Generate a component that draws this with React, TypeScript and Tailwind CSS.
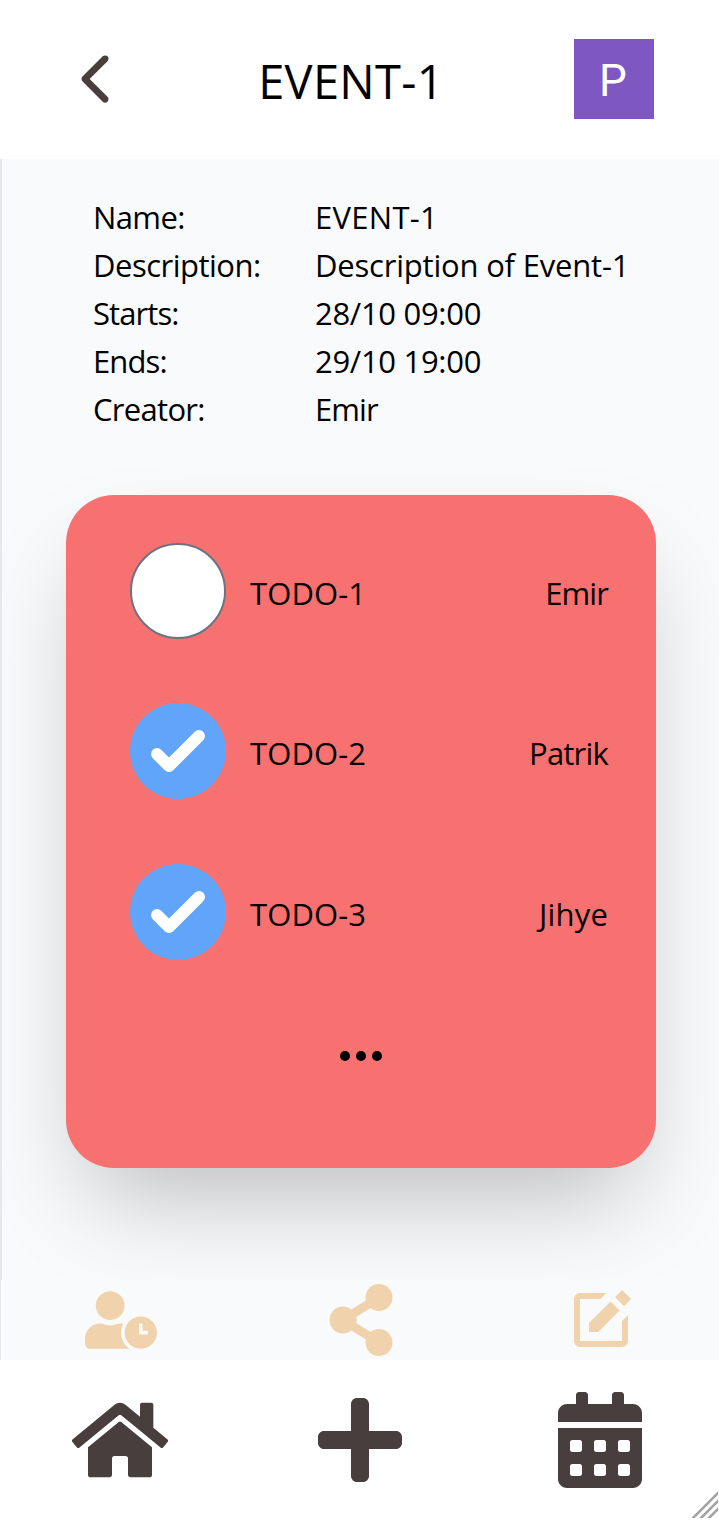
import React from "react";
import { FaUserClock, FaShareAlt, FaHome, FaPlus, FaCalendarAlt } from "react-icons/fa";

const details = [
  { label: "Name:", value: "EVENT-1", labelClass: "tracking-[-0.6px]", valueClass: "tracking-[0.3px]" },
  { label: "Description:", value: "Description of Event-1", labelClass: "tracking-[-0.5px]", valueClass: "tracking-[-0.2px]" },
  { label: "Starts:", value: "28/10 09:00", labelClass: "tracking-[-0.9px]", valueClass: "tracking-[-0.3px]" },
  { label: "Ends:", value: "29/10 19:00", labelClass: "tracking-[-0.9px]", valueClass: "tracking-[-0.3px]" },
  { label: "Creator:", value: "Emir", labelClass: "tracking-[-0.7px]", valueClass: "tracking-[-0.9px]" },
];

const todos = [
  { title: "TODO-1", owner: "Emir", done: false, ownerClass: "tracking-[-0.9px]" },
  { title: "TODO-2", owner: "Patrik", done: true, ownerClass: "tracking-[-0.8px]" },
  { title: "TODO-3", owner: "Jihye", done: true, ownerClass: "tracking-[0.2px]" },
];

function BackIcon() {
  return (
    <svg className="h-[72px] w-[72px]" viewBox="0 0 512 512" fill="currentColor">
      <path d="M217.9 256L345 129c9.4-9.4 9.4-24.6 0-33.9-9.4-9.4-24.6-9.3-34 0L167 239c-9.1 9.1-9.3 23.7-.7 33.1L310.9 417c4.7 4.7 10.9 7 17 7s12.3-2.3 17-7c9.4-9.4 9.4-24.6 0-33.9L217.9 256z" />
    </svg>
  );
}

function EditIcon() {
  return (
    <svg className="h-[72px] w-[72px]" viewBox="0 0 24 24" fill="currentColor">
      <path d="M13.8 3H5a2 2 0 0 0-2 2v14a2 2 0 0 0 2 2h14a2 2 0 0 0 2-2v-8.7l-2 2V19H5V5h6.8z" />
      <path d="M8 16h3.1l7.1-7.2-3-3L8 13z" />
      <path d="M16.7 4.4 19 2l3 3-2.3 2.4z" />
    </svg>
  );
}

function Check({ done }: { done: boolean }) {
  if (!done) return <span className="size-24 rounded-full border-2 border-[#6b7280] bg-white" />;
  return (
    <span className="size-24 rounded-full bg-[#60a5fa] text-white">
      <svg className="size-24" viewBox="0 0 16 16" fill="currentColor">
        <path d="M12.207 4.793a1 1 0 010 1.414l-5 5a1 1 0 01-1.414 0l-2-2a1 1 0 011.414-1.414L6.5 9.086l4.293-4.293a1 1 0 011.414 0z" />
      </svg>
    </span>
  );
}

export default function App() {
  return (
    <div className="flex h-[1520px] w-[719px] flex-col overflow-hidden bg-white font-['Open_Sans','Noto_Sans',sans-serif] text-black">
      <header className="grid h-[159px] shrink-0 grid-cols-[200px_1fr_200px] items-center pb-px">
        <div className="pl-[59px] text-[#493e3e]">
          <BackIcon />
        </div>
        <h1 className="pt-1 pr-[17px] text-center text-[47px] leading-[64px] tracking-[0.3px] whitespace-nowrap">EVENT-1</h1>
        <div className="ml-[55px] flex size-20 items-center justify-center bg-[#7e57c2] pt-[3px] pr-0.5 font-[Roboto] text-[44px] leading-none text-white">
          P
        </div>
      </header>

      <main className="h-[1121px] shrink-0 overflow-hidden border-l-2 border-[#e5e7eb] bg-[#f9fafc]">
        <dl className="mt-[34px] ml-[91px] grid grid-cols-[222px_1fr] text-[31px] leading-[48px] whitespace-nowrap">
          {details.map((d) => (
            <React.Fragment key={d.label}>
              <dt className={d.labelClass}>{d.label}</dt>
              <dd className={d.valueClass}>{d.value}</dd>
            </React.Fragment>
          ))}
        </dl>

        <section className="mt-[62px] ml-16 flex h-[673px] w-[590px] flex-col rounded-[48px] bg-[#f87171] pt-12 pr-12 pl-16 shadow-[0_50px_100px_-24px_rgba(0,0,0,0.25)]">
          <ul className="flex flex-col gap-[64.4px]">
            {todos.map((t) => (
              <li key={t.title} className="flex items-center text-[31px] leading-[48px]">
                <Check done={t.done} />
                <span className="ml-6 pt-1 tracking-[0.1px]">{t.title}</span>
                <span className={`ml-auto pt-1 ${t.ownerClass}`}>{t.owner}</span>
              </li>
            ))}
          </ul>
          <div className="mt-[91px] -ml-4 flex justify-center gap-1.5">
            <span className="size-2.5 rounded-full bg-black" />
            <span className="size-2.5 rounded-full bg-black" />
            <span className="size-2.5 rounded-full bg-black" />
          </div>
        </section>
      </main>

      <div className="grid h-20 w-[721px] shrink-0 grid-cols-3 items-center justify-items-center border-l border-[#e5e7eb] bg-[#f9fafc] text-[#f0d2ac]">
        <FaUserClock className="h-[72px] w-[72px]" />
        <FaShareAlt className="h-[72px] w-[72px]" />
        <EditIcon />
      </div>

      <nav className="relative grid h-40 w-[720px] shrink-0 grid-cols-3 items-center justify-items-center text-[#493e3e]">
        <FaHome className="size-24" />
        <FaPlus className="size-24" />
        <FaCalendarAlt className="size-24" />
        <svg className="absolute right-0.5 bottom-0.5 h-[26px] w-[26px]" viewBox="0 0 26 26" stroke="#a3a3a3" strokeWidth="2.6">
          <path d="M0 27 27 0M8 27 27 8M16 27 27 16" />
        </svg>
      </nav>
    </div>
  );
}
